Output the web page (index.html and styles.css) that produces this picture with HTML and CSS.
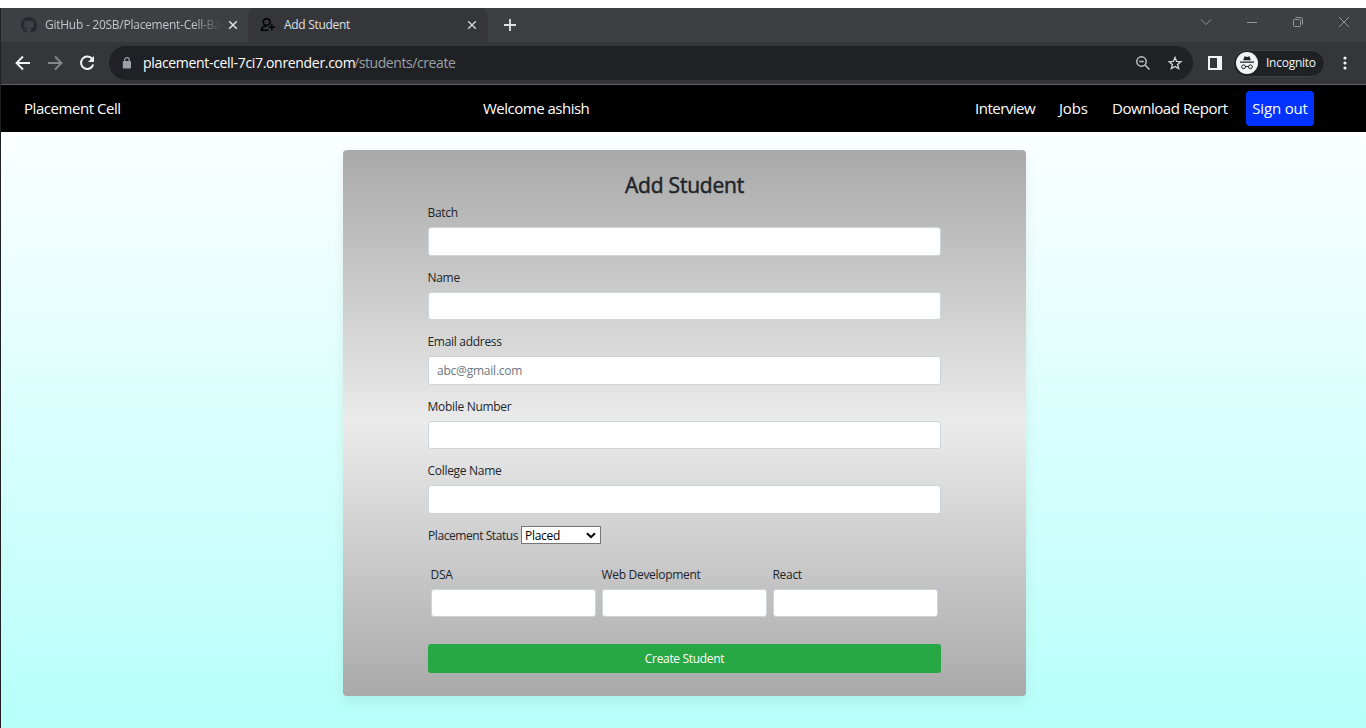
FILE: index.html
```html
<!DOCTYPE html>
<html lang="en">
<head>
<meta charset="utf-8">
<title>Add Student</title>
<link rel="stylesheet" href="styles.css">
</head>
<body>
<div class="window">
  <div class="tabstrip">
    <div class="tab tab-idle">
      <svg class="favicon" width="16" height="16" viewBox="0 0 16 16"><path fill="#24292e" d="M8 0C3.58 0 0 3.58 0 8c0 3.54 2.29 6.53 5.47 7.59.4.07.55-.17.55-.38 0-.19-.01-.82-.01-1.49-2.01.37-2.53-.49-2.69-.94-.09-.23-.48-.94-.82-1.13-.28-.15-.68-.52-.01-.53.63-.01 1.08.58 1.23.82.72 1.21 1.87.87 2.33.66.07-.52.28-.87.51-1.07-1.78-.2-3.64-.89-3.64-3.95 0-.87.31-1.59.82-2.15-.08-.2-.36-1.02.08-2.12 0 0 .67-.21 2.2.82A7.7 7.7 0 0 1 8 3.86c.68 0 1.36.09 2 .27 1.53-1.04 2.2-.82 2.2-.82.44 1.1.16 1.92.08 2.12.51.56.82 1.27.82 2.15 0 3.07-1.87 3.75-3.65 3.95.29.25.54.73.54 1.48 0 1.07-.01 1.93-.01 2.2 0 .21.15.46.55.38A8.01 8.01 0 0 0 16 8c0-4.42-3.58-8-8-8z"/></svg>
      <span class="tab-title faded">GitHub - 20SB/Placement-Cell-Ba</span>
      <svg class="close" width="10" height="10" viewBox="0 0 10 10"><path d="M1.2 1.2l7.600 7.600M8.800 1.200L1.200 8.800" stroke="#dfe1e5" stroke-width="1.500"/></svg>
    </div>
    <div class="tab tab-active">
      <svg class="favicon" width="16" height="16" viewBox="0 0 16 16" fill="none" stroke="#000" stroke-width="1.500"><circle cx="6.700" cy="5" r="3.300"/><path d="M6.500 8.700C3.500 9.200 1.500 10.700 1.500 13.200h6.700M11.800 7.200v6M8.800 10.200h6.200"/></svg>
      <span class="tab-title">Add Student</span>
      <svg class="close" width="10" height="10" viewBox="0 0 10 10"><path d="M1.200 1.200l7.600 7.600M8.800 1.200L1.200 8.800" stroke="#d0d2d5" stroke-width="1.400"/></svg>
    </div>
    <svg class="new-tab" width="12" height="12" viewBox="0 0 12 12"><path d="M6 0v12M0 6h12" stroke="#dfe1e5" stroke-width="1.800"/></svg>
    <div class="controls">
      <svg width="12" height="12" viewBox="0 0 12 12"><path d="M1 3.500l5 5 5-5"/></svg>
      <svg width="12" height="12" viewBox="0 0 12 12"><path d="M1 6.500h10"/></svg>
      <svg width="12" height="12" viewBox="0 0 12 12"><rect x="1.500" y="3.500" width="7" height="7" rx="1"/><path d="M3.500 1.500h5a2 2 0 0 1 2 2v5"/></svg>
      <svg width="12" height="12" viewBox="0 0 12 12"><path d="M1 1l10 10M11 1L1 11"/></svg>
    </div>
  </div>
  <div class="toolbar">
    <svg class="nav-icon" width="16" height="16" viewBox="0 0 16 16" fill="none" stroke="#f1f3f4" stroke-width="1.900"><path d="M15 8H2M8 1.500L1.500 8 8 14.500"/></svg>
    <svg class="nav-icon" width="16" height="16" viewBox="0 0 16 16" fill="none" stroke="#85878a" stroke-width="1.900"><path d="M1 8h13M8 1.500L14.500 8 8 14.500"/></svg>
    <svg class="nav-icon" width="16" height="16" viewBox="0 0 16 16" fill="none" stroke="#f1f3f4" stroke-width="2"><path d="M13.300 4.200A6.200 6.200 0 1 0 14.200 9.500"/><path d="M15 1v6H9z" fill="#f1f3f4" stroke="none"/></svg>
    <div class="omnibox">
      <svg class="lock" width="10" height="13" viewBox="0 0 10 13"><rect x=".8" y="4" width="8.200" height="7.500" rx="1" fill="#9aa0a6"/><path d="M2.600 4.500V3a2.300 2.300 0 0 1 4.600 0v1.500" fill="none" stroke="#9aa0a6" stroke-width="1.200"/></svg>
      <span class="url">placement-cell-7ci7.onrender.com</span><span class="path">/students/create</span>
      <svg class="magnify" width="16" height="16" viewBox="0 0 16 16" fill="none" stroke="#bfc2c5" stroke-width="1.500"><circle cx="6.500" cy="6.500" r="4.700"/><path d="M10 10l4.500 4.500M4.300 6.500h4.400"/></svg>
      <svg class="star" width="16" height="16" viewBox="0 0 16 16" fill="none" stroke="#d0d2d5" stroke-width="1.400"><path d="M8 2.600l1.600 3.800 4.200.4-3.200 2.700 1 4.100L8 11.500l-3.600 2.100 1-4.100-3.200-2.700 4.200-.4z"/></svg>
    </div>
    <svg class="panel" width="14" height="14" viewBox="0 0 14 14"><path fill="#f1f3f4" fill-rule="evenodd" d="M0 0h14v14H0zM2 2v10h7V2z"/></svg>
    <div class="incognito">
      <svg width="22" height="22" viewBox="0 0 22 22"><circle cx="11" cy="11" r="11" fill="#f1f3f4"/><path fill="#202124" d="M7.200 8.200L8.500 4.300l2.500.6 2.500-.6 1.300 3.900zM4 9.500h14v1.200H4z"/><g fill="none" stroke="#202124" stroke-width="1"><circle cx="7.600" cy="14.800" r="1.900"/><circle cx="14.400" cy="14.800" r="1.900"/><path d="M9.500 14.500h3"/></g></svg>
      <span class="incognito-label">Incognito</span>
    </div>
    <svg class="dots" width="4" height="14" viewBox="0 0 4 14" fill="#f1f3f4"><circle cx="2" cy="2" r="1.600"/><circle cx="2" cy="7" r="1.600"/><circle cx="2" cy="12" r="1.600"/></svg>
  </div>
  <nav class="navbar">
    <span class="brand">Placement Cell</span>
    <span class="welcome">Welcome ashish</span>
    <div class="links">
      <span class="l-interview">Interview</span>
      <span class="l-jobs">Jobs</span>
      <span class="l-report">Download Report</span>
      <span class="signout">Sign out</span>
    </div>
  </nav>
  <main class="page">
    <form class="card">
      <h1 class="title">Add Student</h1>
      <div class="field"><label>Batch</label><input class="input"></div>
      <div class="field"><label>Name</label><input class="input"></div>
      <div class="field"><label>Email address</label><input class="input" placeholder="abc@gmail.com"></div>
      <div class="field"><label>Mobile Number</label><input class="input"></div>
      <div class="field"><label>College Name</label><input class="input"></div>
      <div class="status">
        <span class="status-label">Placement Status</span>
        <div class="select"><span>Placed</span><svg width="10" height="7" viewBox="0 0 10 7"><path d="M1 1.200l4 4 4-4" fill="none" stroke="#000" stroke-width="2"/></svg></div>
      </div>
      <div class="scores">
        <div><label>DSA</label><input class="input"></div>
        <div><label>Web Development</label><input class="input"></div>
        <div><label>React</label><input class="input"></div>
      </div>
      <button class="submit" type="button">Create Student</button>
    </form>
  </main>
</div>
</body>
</html>
```
FILE: styles.css
```css
* { box-sizing: border-box; }
body {
  margin: 0;
  padding-top: 8px;
  height: 728px;
  overflow: hidden;
  background: #fff;
  font-family: "Open Sans", "Noto Sans", sans-serif;
  color: #212529;
}
svg { display: block; flex: none; }
span, label { white-space: nowrap; }
.window { height: 720px; border-left: 1px solid #202124; display: flex; flex-direction: column; }

.tabstrip { height: 34px; flex: none; display: flex; background: #3c4043; font-size: 12px; color: #dfe1e5; }
.tab { display: flex; align-items: center; height: 34px; }
.tab-idle { width: 247px; padding-left: 20px; border-radius: 0 0 8px 0; color: #c3c6ca; }
.tab-active { width: 240px; padding-left: 12px; background: #35363a; border-radius: 8px 8px 0 0; }
.tab-title { margin-left: 8px; padding-bottom: 1px; letter-spacing: -.3px; }
.faded { width: 176px; overflow: hidden; letter-spacing: -.26px; mask-image: linear-gradient(90deg, #000 84%, transparent); }
.tab-active .tab-title { width: 176px; }
.close { margin-left: 7px; }
.new-tab { margin: 11px 0 0 16px; }
.controls { margin-left: auto; padding: 8px 16px 0 0; display: flex; gap: 34px; }
.controls svg { fill: none; stroke: #94979a; stroke-width: 1; }

.toolbar { height: 43px; flex: none; display: flex; align-items: center; padding-left: 14px; background: #35363a; border-bottom: 1px solid #5f6368; }
.nav-icon { margin-right: 16px; }
.omnibox { width: 1084px; height: 34px; margin-left: -2px; padding-left: 13px; border-radius: 17px; background: #202124; display: flex; align-items: center; font-size: 14px; }
.url { margin-left: 11px; padding-bottom: 2px; color: #fff; width: 211px; letter-spacing: -.32px; }
.path { padding-bottom: 2px; color: #9aa0a6; letter-spacing: -.42px; }
.magnify { margin-left: auto; }
.star { margin: 0 10px 0 16px; }
.panel { margin-left: 15px; }
.incognito { width: 92px; height: 27px; margin-left: 11px; padding-left: 2px; border: 1px solid #3f4145; border-radius: 14px; background: #202124; display: flex; align-items: center; color: #f1f3f4; font-size: 12px; }
.incognito-label { margin-left: 8px; padding-bottom: 1px; letter-spacing: -.25px; }
.dots { margin-left: 18px; }

.navbar { height: 47px; flex: none; display: flex; align-items: center; padding: 0 52px 0 23px; background: #000; color: #fff; font-size: 15px; letter-spacing: -.45px; }
.brand { width: 459px; padding-bottom: 2px; }
.welcome { padding-bottom: 2px; letter-spacing: -.5px; }
.links { margin-left: auto; display: flex; align-items: center; }
.l-interview, .l-jobs, .l-report { padding-bottom: 2px; }
.l-interview { width: 84px; letter-spacing: -.5px; }
.l-jobs { width: 53px; letter-spacing: -.2px; }
.l-report { width: 134px; }
.signout { width: 68px; height: 35px; line-height: 34px; border-radius: 4px; background: #0033ff; text-align: center; letter-spacing: -.15px; }

.page { flex: 1; background: linear-gradient(#fbffff, #b7fffa); padding: 18px 0 0 342px; }
.card { width: 683px; height: 546px; padding: 23px 85px 0; border-radius: 4px; background: linear-gradient(#a9a9a9, #ebebeb 50%, #a9a9a9); box-shadow: 0 6px 13px rgba(0, 0, 0, .07); font-size: 12px; }
.title { margin: 0 0 6px; height: 25px; line-height: 25px; text-align: center; font-size: 21px; font-weight: 500; letter-spacing: -.2px; -webkit-text-stroke: .5px #212529; }
label { display: block; height: 17px; line-height: 17px; margin-bottom: 6px; margin-left: -.5px; letter-spacing: -.3px; }
.field { height: 64.5px; }
.input { display: block; width: 100%; height: 28.800px; padding: 0 8px; border: 1px solid #ced4da; border-radius: 3px; background: #fff; font: 12px "Open Sans", sans-serif; letter-spacing: -.22px; }
.input::placeholder { color: #6c757d; opacity: 1; }
.status { display: flex; align-items: center; height: 18px; margin-top: -.5px; letter-spacing: -.3px; }
.status-label { width: 93px; letter-spacing: -.43px; }
.select { width: 80px; height: 18px; padding: 0 4px 0 3px; border: 1px solid #767676; background: #fff; color: #000; display: flex; align-items: center; justify-content: space-between; }
.scores { display: grid; grid-template-columns: repeat(3, 165px); gap: 6px; padding-left: 3px; margin-top: 22px; }
.scores .input { height: 28px; }
.submit { display: block; width: 513px; height: 29px; margin-top: 27px; padding: 0; border: 0; border-radius: 3px; background: #28a745; color: #fff; font: 12px "Open Sans", sans-serif; letter-spacing: -.33px; }
```
